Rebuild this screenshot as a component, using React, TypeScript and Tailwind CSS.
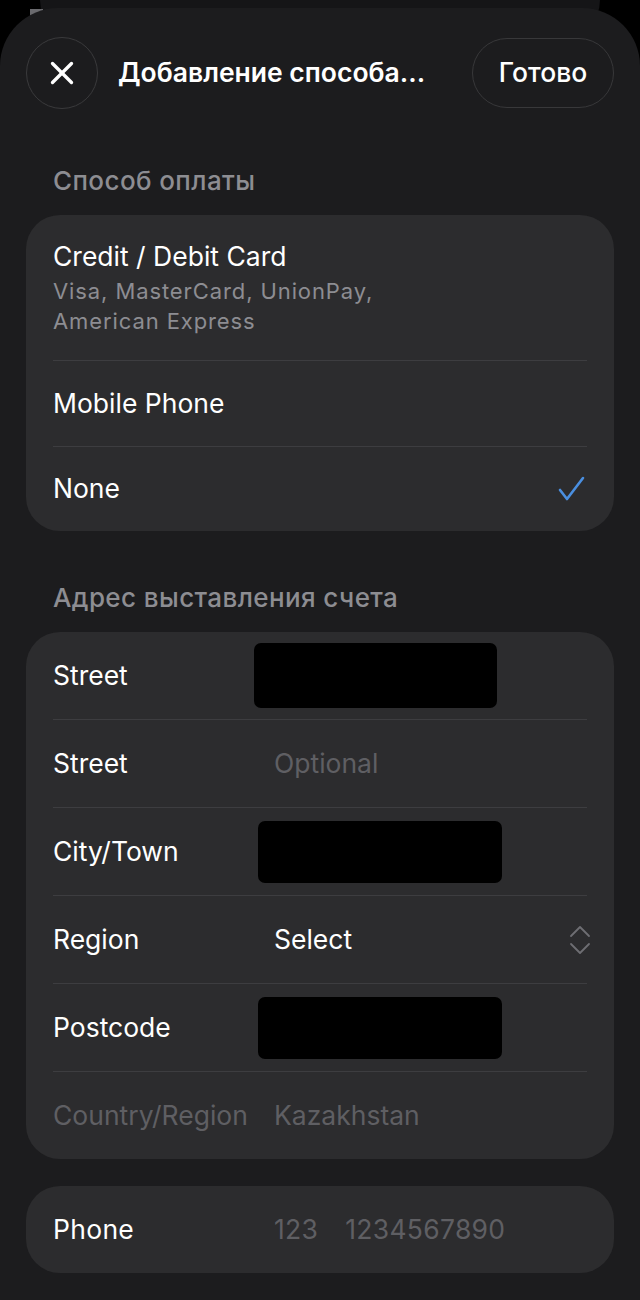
import { X } from 'lucide-react';

const FONT = 'font-["Inter","Noto_Sans",sans-serif]';

type AddressRow = {
  label: string;
  value?: string;
  redacted?: 'wide' | 'narrow';
  muted?: boolean;
  select?: boolean;
};

const ADDRESS_ROWS: AddressRow[] = [
  { label: 'Street', redacted: 'wide' },
  { label: 'Street', value: 'Optional' },
  { label: 'City/Town', redacted: 'narrow' },
  { label: 'Region', value: 'Select', select: true },
  { label: 'Postcode', redacted: 'narrow' },
  { label: 'Country/Region', value: 'Kazakhstan', muted: true },
];

function Divider() {
  return <div className="mx-[27px] h-px bg-[#3d3d40]" />;
}

function SectionTitle({ children }: { children: React.ReactNode }) {
  return (
    <div className="px-[53px] text-[26px] font-medium leading-[32px] tracking-[0.4px] text-[#8d8d92]">{children}</div>
  );
}

function UpDownIcon() {
  return (
    <svg width="22" height="32" viewBox="0 0 22 32" fill="none" stroke="#6e6e73" strokeWidth="1.8" strokeLinecap="round" strokeLinejoin="round">
      <path d="M2 12 L11 3 L20 12" />
      <path d="M2 20 L11 29 L20 20" />
    </svg>
  );
}

function CheckIcon() {
  return (
    <svg width="28" height="26" viewBox="0 0 28 26" fill="none" stroke="#4a8fe0" strokeWidth="2.6" strokeLinecap="round" strokeLinejoin="round">
      <path d="M2 14 L9 23 L25 2" />
    </svg>
  );
}

export default function App() {
  return (
    <div className={`relative min-h-[1300px] overflow-hidden bg-black ${FONT}`}>
      {/* sheet peeking from behind */}
      <div className="absolute left-[40px] right-[40px] top-[-40px] h-[80px] rounded-[50px] bg-[#151517]" />
      <div className="absolute left-[30px] top-[9px] h-[9px] w-[13px] bg-[#6a6a6e]" />

      <div className="relative mt-[8px] min-h-[1292px] rounded-t-[58px] bg-[#1c1c1e] pb-[26px]">
        {/* header */}
        <div className="flex items-center px-[26px] pt-[29px]">
          <button className="flex h-[72px] w-[72px] shrink-0 items-center justify-center rounded-full border border-[#3a3a3c] bg-[#1c1c1e] text-white">
            <X className="h-[38px] w-[38px]" strokeWidth={2.1} />
          </button>
          <div className="ml-[20px] flex-1 truncate text-[26.5px] font-semibold text-white">
            Добавление способа...
          </div>
          <button className="flex h-[70px] w-[142px] shrink-0 items-center justify-center rounded-full border border-[#38383a] bg-[#1c1c1e] text-[26.5px] font-medium text-white">
            Готово
          </button>
        </div>

        <div className="mt-[56px]">
          <SectionTitle>Способ оплаты</SectionTitle>
        </div>

        {/* payment method */}
        <div className="mx-[26px] mt-[18px] rounded-[34px] bg-[#2c2c2e]">
          <div className="px-[27px] pb-[24px] pt-[25px]">
            <div className="text-[26.5px] leading-[32px] text-white">Credit / Debit Card</div>
            <div className="mt-[4px] text-[22px] leading-[30px] tracking-[0.9px] text-[#8d8d92]">
              Visa, MasterCard, UnionPay,
              <br />
              American Express
            </div>
          </div>
          <Divider />
          <div className="flex h-[85px] items-center px-[27px] text-[26.5px] text-white">Mobile Phone</div>
          <Divider />
          <div className="flex h-[84px] items-center justify-between px-[27px] text-[26.5px] text-white">
            None
            <span className="mr-[1px]">
              <CheckIcon />
            </span>
          </div>
        </div>

        <div className="mt-[51px]">
          <SectionTitle>Адрес выставления счета</SectionTitle>
        </div>

        {/* billing address */}
        <div className="mx-[26px] mt-[18px] rounded-[34px] bg-[#2c2c2e]">
          {ADDRESS_ROWS.map((row, i) => (
            <div key={i}>
              {i > 0 && <Divider />}
              <div className="flex h-[87px] items-center px-[27px] text-[26.5px]">
                <div className={`w-[221px] shrink-0 ${row.muted ? 'text-[#5f5f63]' : 'text-white'}`}>{row.label}</div>
                {row.redacted === 'wide' && <div className="ml-[-20px] h-[65px] w-[243px] rounded-[7px] bg-black" />}
                {row.redacted === 'narrow' && <div className="ml-[-16px] h-[62px] w-[244px] rounded-[7px] bg-black" />}
                {!row.redacted && (
                  <div className="flex flex-1 items-center justify-between">
                    <span className={row.select ? 'text-white' : 'text-[#5f5f63]'}>{row.value}</span>
                    {row.select && (
                      <span className="mr-[-4px]">
                        <UpDownIcon />
                      </span>
                    )}
                  </div>
                )}
              </div>
            </div>
          ))}
        </div>

        {/* phone */}
        <div className="mx-[26px] mt-[27px] flex h-[87px] items-center rounded-[34px] bg-[#2c2c2e] px-[27px] text-[26.5px] tracking-[0.3px]">
          <div className="w-[221px] shrink-0 text-white">Phone</div>
          <span className="text-[#5f5f63]">123</span>
          <span className="ml-[27px] text-[#5f5f63]">1234567890</span>
        </div>
      </div>
    </div>
  );
}
